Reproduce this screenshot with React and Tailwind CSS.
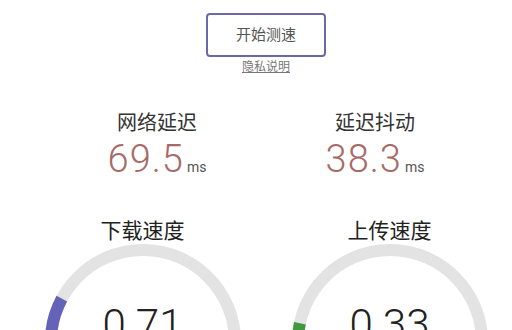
const FONT = "font-['Roboto','Noto_Sans_CJK_SC',sans-serif]";

function Metric({ label, value }) {
  return (
    <div className="flex flex-col items-center">
      <div className="text-[20px] leading-[28px] text-[#333]">{label}</div>
      <div className="flex items-baseline text-[#a76a68]">
        <span className="text-[38px] leading-[44px] font-light tracking-[1px]">{value}</span>
        <span className="ml-[3px] text-[14px] text-[#555]">ms</span>
      </div>
    </div>
  );
}

function Gauge({ label, value, color, pct }) {
  // 270° gauge, starting bottom-left, clockwise
  const r = 92;
  const c = 2 * Math.PI * r;
  const track = c * 0.75;
  return (
    <div className="flex flex-col items-center">
      <div className="text-[21px] leading-[24px] text-[#222]">{label}</div>
      <div className="relative mt-[1px] h-[196px] w-[196px]">
        <svg width="196" height="196" viewBox="0 0 196 196" className="rotate-[135deg]">
          <circle cx="98" cy="98" r={r} fill="none" stroke="#e3e3e3" strokeWidth="12"
            strokeDasharray={`${track} ${c}`} />
          <circle cx="98" cy="98" r={r} fill="none" stroke={color} strokeWidth="12"
            strokeDasharray={`${track * pct} ${c}`} />
        </svg>
        <div className="absolute inset-x-0 top-[56px] text-center text-[42px] leading-[50px] font-light text-[#222]">
          {value}
        </div>
      </div>
    </div>
  );
}

export default function App() {
  return (
    <div className={`${FONT} h-[330px] w-[512px] overflow-hidden bg-white pl-5`}>
      <div className="flex flex-col items-center pt-[13px]">
        <button className="h-[44px] w-[120px] rounded-[4px] border-2 border-[#6c68a8] text-[15px] text-[#555]">
          开始测速
        </button>
        <a className="mt-[2px] text-[12px] leading-[16px] text-[#777] underline">隐私说明</a>
      </div>
      <div className="mt-[34px] grid grid-cols-[218px_218px] justify-center">
        <Metric label="网络延迟" value="69.5" />
        <Metric label="延迟抖动" value="38.3" />
      </div>
      <div className="mt-[38px] grid grid-cols-[247px_247px] justify-center">
        <Gauge label="下载速度" value="0.71" color="#6563b7" pct={0.27} />
        <Gauge label="上传速度" value="0.33" color="#3d9a41" pct={0.21} />
      </div>
    </div>
  );
}
